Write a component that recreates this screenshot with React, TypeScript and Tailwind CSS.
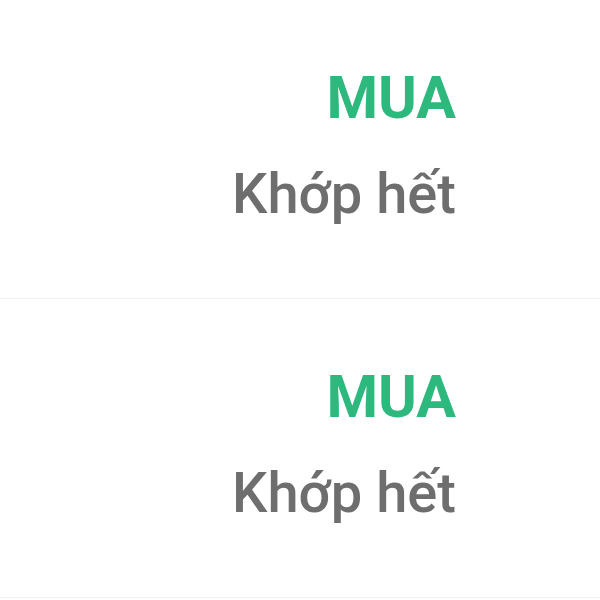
import React from 'react';

function OrderRow() {
  return (
    <div className="h-[299px] border-b border-[#f1f1f1] flex flex-col items-end pr-[144px] pt-[66px]">
      <div className="text-[59px] leading-[64px] font-bold text-[#2db87e]">MUA</div>
      <div className="mt-[32px] text-[56px] leading-[64px] font-medium text-[#6e6e6e]">Khớp hết</div>
    </div>
  );
}

export default function App() {
  return (
    <div className="w-[600px] h-[600px] bg-white overflow-hidden" style={{ fontFamily: 'Roboto, "Noto Sans", sans-serif' }}>
      <OrderRow />
      <OrderRow />
    </div>
  );
}
